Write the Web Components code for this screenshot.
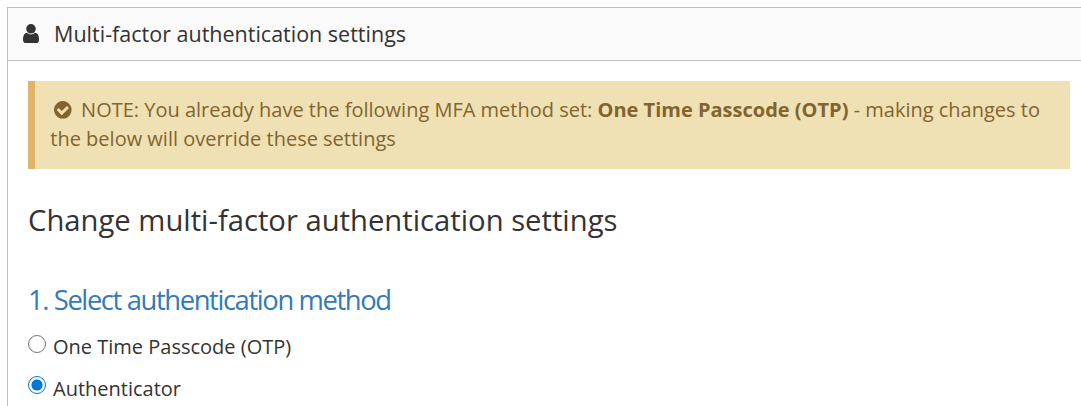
<!DOCTYPE html>
<html lang="en">
<head>
<meta charset="utf-8">
<title>Multi-factor authentication settings</title>
<style>
    body {
        margin: 7px 0 0 7px;
        height: 399px;
        overflow: hidden;
        background: #fff;
        color: #333;
        font-family: "Open Sans", "Noto Sans", sans-serif;
        font-size: 20px;
    }
</style>
</head>
<body>
<settings-panel>
    <fa-icon slot="icon" name="user" width="16" height="19.2"></fa-icon>
    <span slot="title">Multi-factor authentication settings</span>
    <note-box>NOTE: You already have the following MFA method set: <b>One Time Passcode (OTP)</b> - making changes to the below will override these settings</note-box>
    <section-heading>Change multi-factor authentication settings</section-heading>
    <step-heading>1. Select authentication method</step-heading>
    <radio-option>One Time Passcode (OTP)</radio-option>
    <radio-option checked>Authenticator</radio-option>
</settings-panel>

<script>
// glyph outlines, y axis points up
const ICONS = {
    user: {
        width: 1280,
        path: 'M1280 137q0 -109 -62.5 -187t-150.5 -78h-854q-88 0 -150.5 78t-62.5 187q0 85 8.5 160.5t31.5 152t58.5 131t94 89t134.5 34.5q131 -128 313 -128t313 128q76 0 134.5 -34.5t94 -89t58.5 -131t31.5 -152t8.5 -160.5zM1024 1024q0 -159 -112.5 -271.5t-271.5 -112.5t-271.5 112.5t-112.5 271.5t112.5 271.5t271.5 112.5t271.5 -112.5t112.5 -271.5z'
    },
    check: {
        width: 1536,
        path: 'M1284 802q0 28 -18 45l-91 91q-19 19 -45 19t-45 -19l-408 -407l-226 226q-19 19 -45 19t-45 -19l-91 -91q-18 -17 -18 -45q0 -27 18 -45l362 -362q19 -19 45 -19q27 0 46 19l543 543q18 18 18 45zM1536 640q0 -209 -103 -385.5t-279.5 -279.5t-385.5 -103t-385.5 103t-279.5 279.5t-103 385.5t103 385.5t279.5 279.5t385.5 103t385.5 -103t279.5 -279.5t103 -385.5z'
    }
};

class FaIcon extends HTMLElement {
    constructor() {
        super();
        this.attachShadow({mode: 'open'});
    }

    connectedCallback() {
        const icon = ICONS[this.getAttribute('name')];
        this.shadowRoot.innerHTML = `
        <style>
            :host { display: inline-block; line-height: 0; }
            svg { display: block; fill: currentColor; }
        </style>
        <svg width="${this.getAttribute('width')}" height="${this.getAttribute('height')}" viewBox="0 0 ${icon.width} 1536" aria-hidden="true">
            <path transform="translate(0 1408) scale(1 -1)" d="${icon.path}"/>
        </svg>
        `;
    }
}

class SettingsPanel extends HTMLElement {
    constructor() {
        super();
        this.attachShadow({mode: 'open'}).innerHTML = `
        <style>
            :host {
                display: block;
                border: solid #bfbfbf;
                border-width: 1px 0 0 1px;
                min-height: 420px;
            }
            header {
                display: flex;
                box-sizing: border-box;
                align-items: center;
                gap: 15.3px;
                height: 53px;
                padding: 0 0 1px 14.8px;
                background: #fafafa;
                border-bottom: 1px solid #bfbfbf;
                font-size: 21.5px;
            }
            main { padding: 20px 11px 0 20px; }
        </style>
        <header><slot name="icon"></slot><slot name="title"></slot></header>
        <main><slot></slot></main>
        `;
    }
}

class NoteBox extends HTMLElement {
    constructor() {
        super();
        this.attachShadow({mode: 'open'}).innerHTML = `
        <style>
            :host {
                display: block;
                box-sizing: border-box;
                height: 88px;
                padding: 14px 20px 0 15.3px;
                border-left: 7px solid #dfb56c;
                background: #efe1b3;
                color: #826430;
                line-height: 29px;
            }
            fa-icon { margin: 0 9.1px 0 4.1px; vertical-align: -2px; }
        </style>
        <fa-icon name="check" width="17.6" height="17.6"></fa-icon><slot></slot>
        `;
    }
}

class SectionHeading extends HTMLElement {
    constructor() {
        super();
        this.attachShadow({mode: 'open'}).innerHTML = `
        <style>
            :host { display: block; margin-top: 30px; }
            h2 { margin: 0; font-size: 29.22px; font-weight: 400; line-height: 42px; }
        </style>
        <h2><slot></slot></h2>
        `;
    }
}

class StepHeading extends HTMLElement {
    constructor() {
        super();
        this.attachShadow({mode: 'open'}).innerHTML = `
        <style>
            :host { display: block; margin: 39px 0 12px; color: #337ab7; }
            h3 { margin: 0; font-size: 27.4px; font-weight: 400; line-height: 40px; letter-spacing: -1.4px; }
        </style>
        <h3><slot></slot></h3>
        `;
    }
}

class RadioOption extends HTMLElement {
    constructor() {
        super();
        const checked = this.hasAttribute('checked') ? 'checked' : '';
        this.attachShadow({mode: 'open'}).innerHTML = `
        <style>
            :host { display: block; height: 29px; margin-bottom: 13px; line-height: 29px; }
            label { display: flex; align-items: flex-start; gap: 7px; }
            input {
                appearance: none;
                box-sizing: border-box;
                flex: none;
                width: 18px;
                height: 18px;
                margin: 3px 0 0;
                border: 1.4px solid #767676;
                border-radius: 50%;
                background: #fff;
            }
            input:checked {
                margin-top: 2px;
                border-color: #0078d7;
                background: radial-gradient(circle, #0078d7 5.2px, #fff 5.9px);
            }
        </style>
        <label><input type="radio" ${checked}><span><slot></slot></span></label>
        `;
    }
}

customElements.define('fa-icon', FaIcon);
customElements.define('settings-panel', SettingsPanel);
customElements.define('note-box', NoteBox);
customElements.define('section-heading', SectionHeading);
customElements.define('step-heading', StepHeading);
customElements.define('radio-option', RadioOption);
</script>
</body>
</html>
